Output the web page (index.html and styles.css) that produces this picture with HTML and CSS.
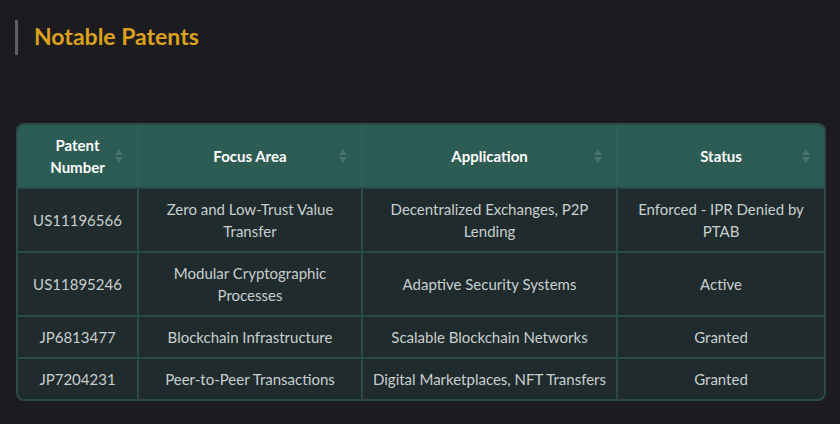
FILE: index.html
```html
<!DOCTYPE html>
<html>
<head>
<meta charset="utf-8">
<link rel="stylesheet" href="styles.css">
</head>
<body>
<section class="page">
  <h2 class="title">Notable Patents</h2>
  <div class="table-wrap">
    <table class="patents">
      <colgroup>
        <col class="c1"><col class="c2"><col class="c3"><col class="c4">
      </colgroup>
      <thead>
        <tr>
          <th><span class="th-label">Patent<br>Number</span><svg class="sort" viewBox="0 0 8 16" width="8" height="16"><path d="M4 1 L8 7 L0 7 Z M4 15 L8 9 L0 9 Z"/></svg></th>
          <th><span class="th-label">Focus Area</span><svg class="sort" viewBox="0 0 8 16" width="8" height="16"><path d="M4 1 L8 7 L0 7 Z M4 15 L8 9 L0 9 Z"/></svg></th>
          <th><span class="th-label">Application</span><svg class="sort" viewBox="0 0 8 16" width="8" height="16"><path d="M4 1 L8 7 L0 7 Z M4 15 L8 9 L0 9 Z"/></svg></th>
          <th><span class="th-label">Status</span><svg class="sort" viewBox="0 0 8 16" width="8" height="16"><path d="M4 1 L8 7 L0 7 Z M4 15 L8 9 L0 9 Z"/></svg></th>
        </tr>
      </thead>
      <tbody>
        <tr>
          <td>US11196566</td>
          <td>Zero and Low-Trust Value Transfer</td>
          <td>Decentralized Exchanges, P2P Lending</td>
          <td>Enforced - IPR Denied by PTAB</td>
        </tr>
        <tr>
          <td>US11895246</td>
          <td>Modular Cryptographic Processes</td>
          <td>Adaptive Security Systems</td>
          <td>Active</td>
        </tr>
        <tr>
          <td>JP6813477</td>
          <td>Blockchain Infrastructure</td>
          <td>Scalable Blockchain Networks</td>
          <td>Granted</td>
        </tr>
        <tr>
          <td>JP7204231</td>
          <td>Peer-to-Peer Transactions</td>
          <td>Digital Marketplaces, NFT Transfers</td>
          <td>Granted</td>
        </tr>
      </tbody>
    </table>
  </div>
</section>
</body>
</html>
```
FILE: styles.css
```css
html, body {
  margin: 0;
  padding: 0;
  background: #1c1c20;
}
body {
  font-family: Lato, "Noto Sans", sans-serif;
  color: #c9cfce;
}
.page {
  padding: 20px 14px 0 16px;
}
.title {
  margin: 0 0 68px -1px;
  padding: 4px 0 6px 16px;
  border-left: 3px solid #5f5f66;
  font-size: 23px;
  font-weight: 700;
  line-height: 25px;
  color: #dba01c;
}
.table-wrap {
  width: 806px;
  border: 2px solid #2c4b47;
  border-radius: 8px;
  overflow: hidden;
  background: #1f2b2d;
}
.patents {
  width: 100%;
  border-collapse: collapse;
  table-layout: fixed;
  font-size: 15px;
  line-height: 22px;
}
.c1 { width: 120px; }
.c2 { width: 224px; }
.c3 { width: 255px; }
.c4 { width: auto; }
.patents th, .patents td {
  border: 2px solid #2c4b47;
  padding: 9px 8px;
  text-align: center;
  vertical-align: middle;
}
.patents tr:first-child th { border-top: 0; }
.patents th:first-child, .patents td:first-child { border-left: 0; }
.patents th:last-child, .patents td:last-child { border-right: 0; }
.patents tbody tr:last-child td { border-bottom: 0; }
.patents thead th {
  background: #2c5c54;
  color: #ffffff;
  font-weight: 700;
  position: relative;
  border-color: #2f6158;
  border-bottom-color: #2c4b47;
  padding-left: 20px;
  padding-right: 20px;
}
.sort {
  position: absolute;
  right: 14px;
  top: 50%;
  margin-top: -8px;
  fill: rgba(255, 255, 255, 0.14);
}
.patents td {
  color: #c9cfce;
}
```
